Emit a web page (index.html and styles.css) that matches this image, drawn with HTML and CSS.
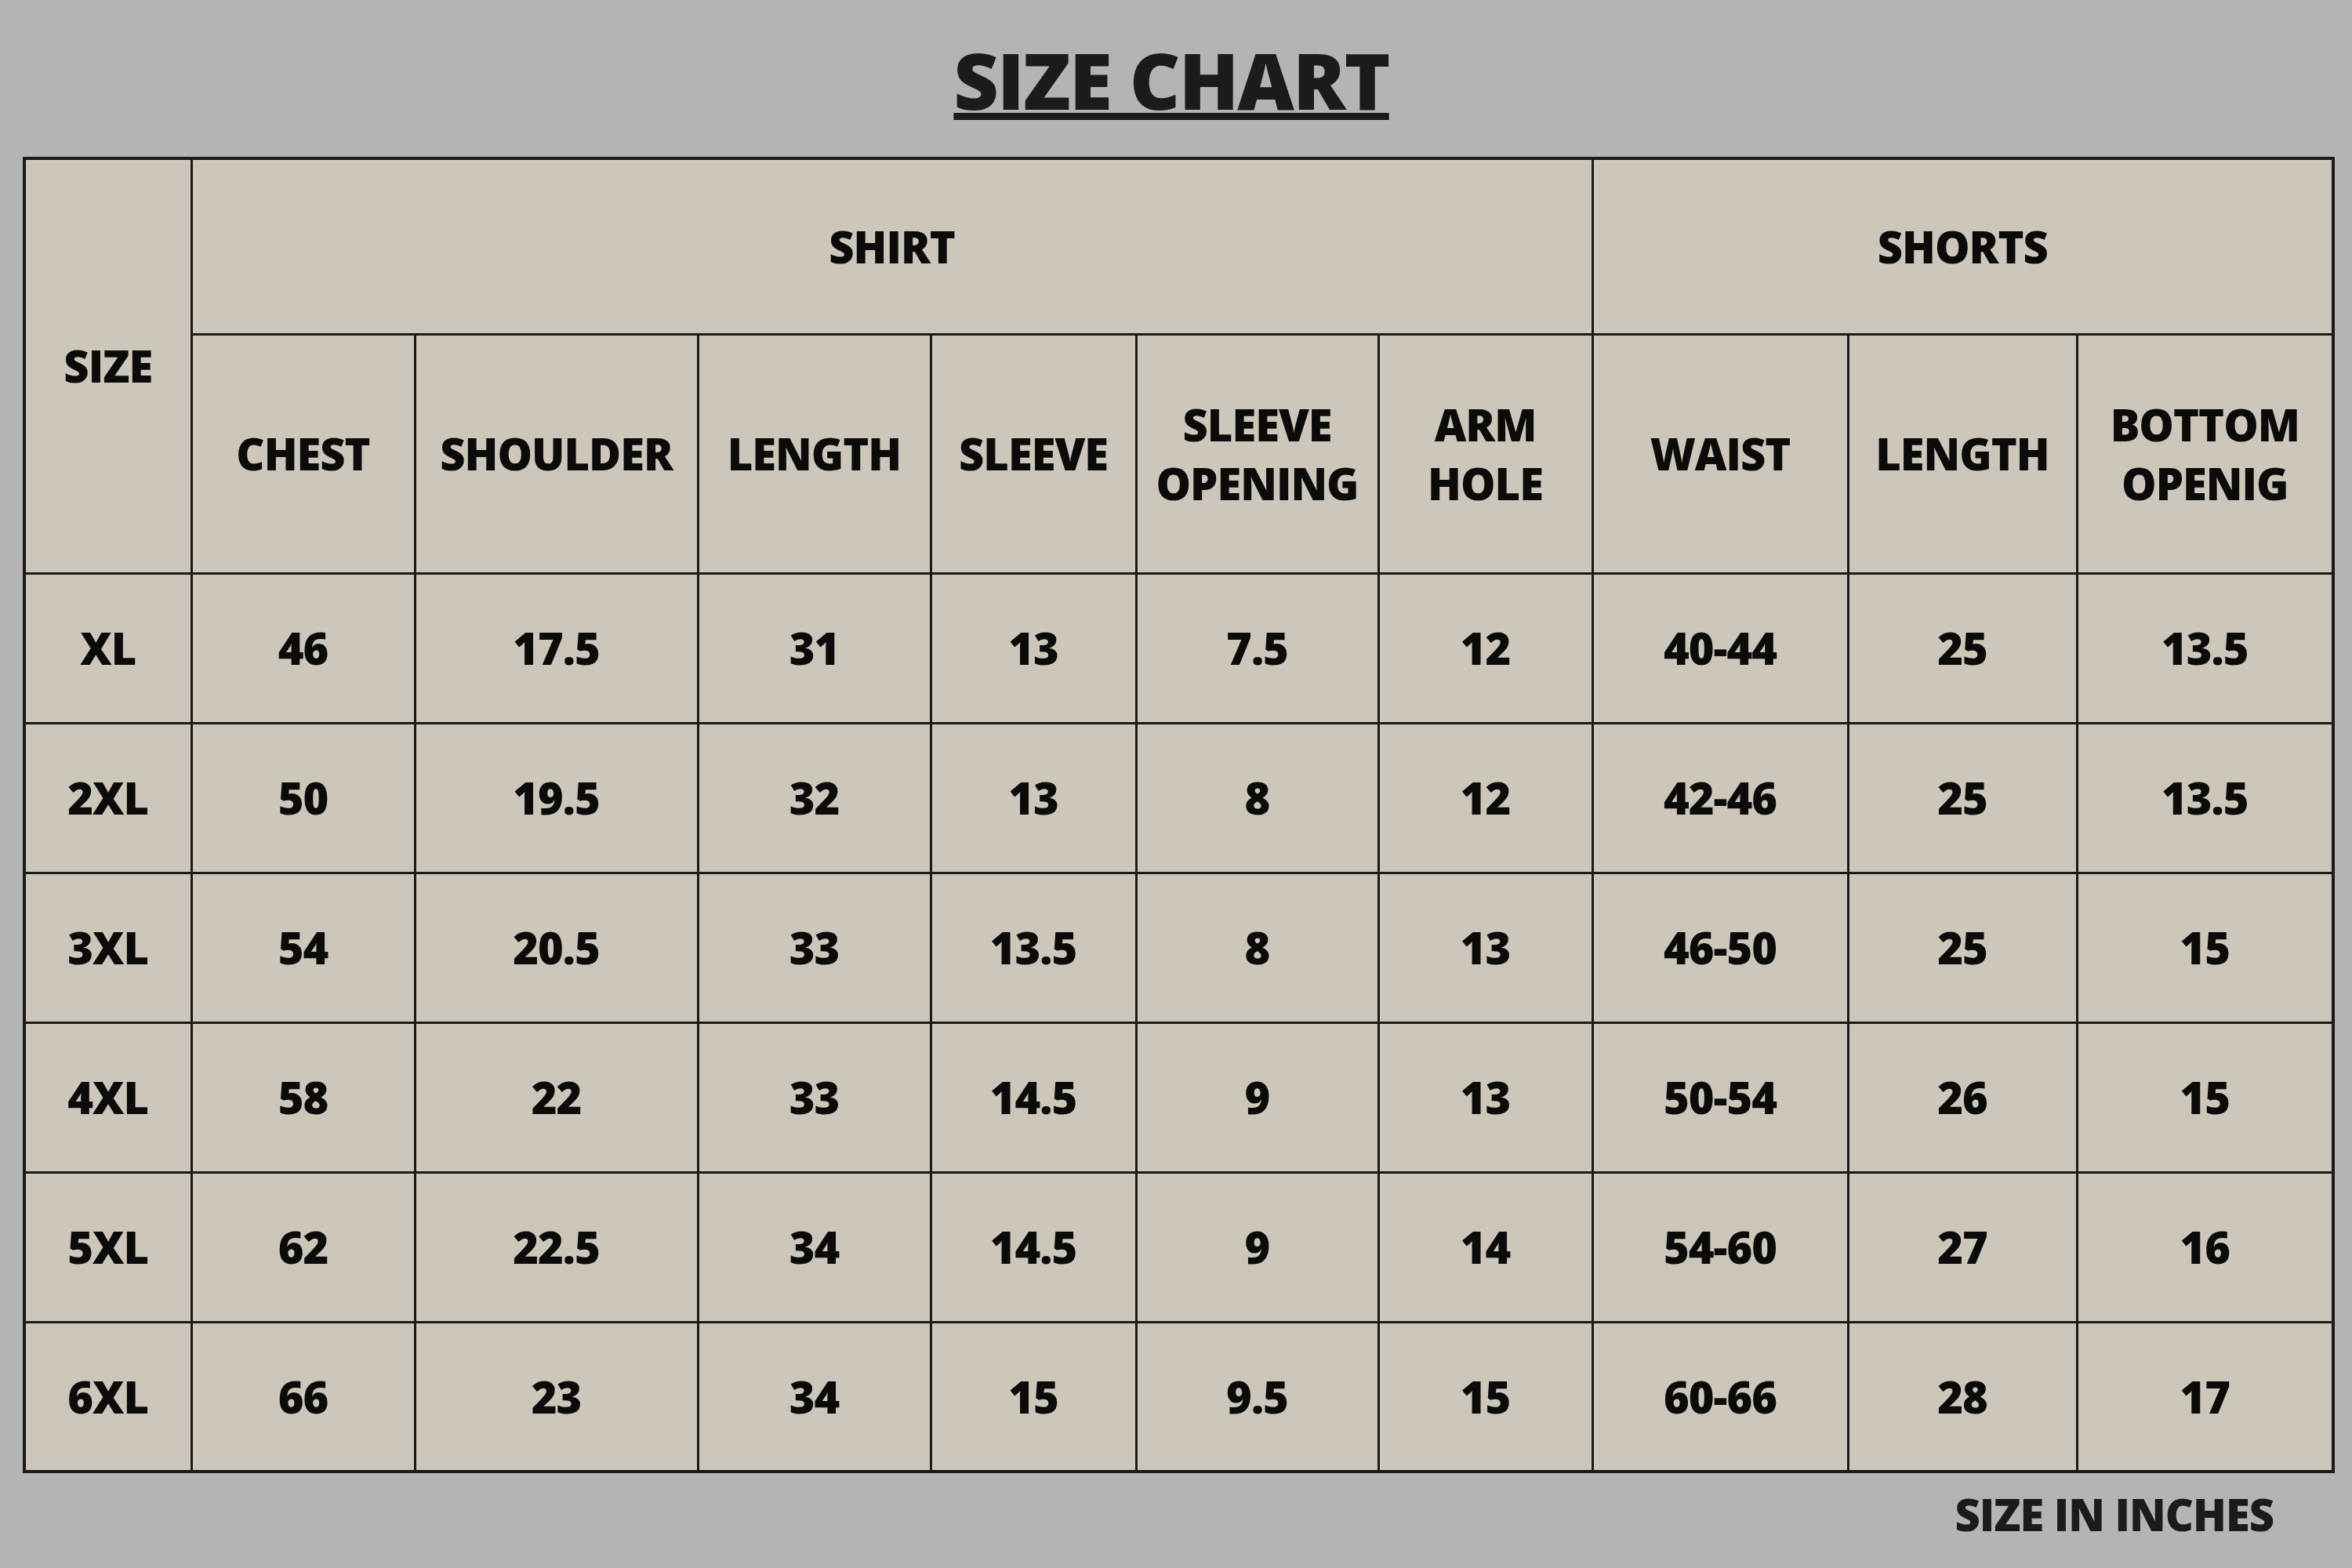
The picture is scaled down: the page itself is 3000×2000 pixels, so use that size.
FILE: index.html
```html
<!DOCTYPE html>
<html>
<head>
<meta charset="utf-8">
<link rel="stylesheet" href="styles.css">
</head>
<body>
<div class="page">
  <div class="title-wrap"><h1 class="title">SIZE CHART</h1></div>
  <table class="chart">
    <colgroup>
      <col class="c-size">
      <col class="c-chest">
      <col class="c-shoulder">
      <col class="c-length">
      <col class="c-sleeve">
      <col class="c-sopen">
      <col class="c-arm">
      <col class="c-waist">
      <col class="c-slength">
      <col class="c-bottom">
    </colgroup>
    <thead>
      <tr class="r-group">
        <th rowspan="2">SIZE</th>
        <th colspan="6">SHIRT</th>
        <th colspan="3">SHORTS</th>
      </tr>
      <tr class="r-head">
        <th>CHEST</th>
        <th>SHOULDER</th>
        <th>LENGTH</th>
        <th>SLEEVE</th>
        <th>SLEEVE<br>OPENING</th>
        <th>ARM<br>HOLE</th>
        <th>WAIST</th>
        <th>LENGTH</th>
        <th>BOTTOM<br>OPENIG</th>
      </tr>
    </thead>
    <tbody>
      <tr><td>XL</td><td>46</td><td>17.5</td><td>31</td><td>13</td><td>7.5</td><td>12</td><td>40-44</td><td>25</td><td>13.5</td></tr>
      <tr><td>2XL</td><td>50</td><td>19.5</td><td>32</td><td>13</td><td>8</td><td>12</td><td>42-46</td><td>25</td><td>13.5</td></tr>
      <tr><td>3XL</td><td>54</td><td>20.5</td><td>33</td><td>13.5</td><td>8</td><td>13</td><td>46-50</td><td>25</td><td>15</td></tr>
      <tr><td>4XL</td><td>58</td><td>22</td><td>33</td><td>14.5</td><td>9</td><td>13</td><td>50-54</td><td>26</td><td>15</td></tr>
      <tr><td>5XL</td><td>62</td><td>22.5</td><td>34</td><td>14.5</td><td>9</td><td>14</td><td>54-60</td><td>27</td><td>16</td></tr>
      <tr><td>6XL</td><td>66</td><td>23</td><td>34</td><td>15</td><td>9.5</td><td>15</td><td>60-66</td><td>28</td><td>17</td></tr>
    </tbody>
  </table>
  <div class="note">SIZE IN INCHES</div>
</div>
</body>
</html>
```

FILE: styles.css
```css
html, body {
  margin: 0;
  padding: 0;
}

body {
  background: #b4b4b4;
  font-family: "Open Sans", "Liberation Sans", sans-serif;
  color: #0d0d0c;
}

.page {
  width: 3000px;
  height: 2000px;
  box-sizing: border-box;
  padding-left: 29px;
}

.title-wrap {
  height: 200px;
  box-sizing: border-box;
  padding-top: 33px;
  padding-right: 41px;
  text-align: center;
}

.title {
  display: inline-block;
  margin: 0;
  font-size: 100px;
  font-weight: 800;
  letter-spacing: -2px;
  line-height: normal;
  color: #1b1b19;
  text-decoration: underline;
  text-decoration-thickness: 9px;
  text-underline-offset: 4px;
}

.chart {
  width: 2945px;
  table-layout: fixed;
  border-collapse: collapse;
  border: 4px solid #1b1a17;
  background: #cdc7bb;
}

.chart th,
.chart td {
  border: 3px solid #1b1a17;
  padding: 0;
  text-align: center;
  vertical-align: middle;
  font-size: 56px;
  font-weight: 800;
  letter-spacing: -1px;
  line-height: 75px;
  color: #0b0b0a;
}

.c-size { width: 213px; }
.c-chest { width: 285px; }
.c-shoulder { width: 361px; }
.c-length { width: 297px; }
.c-sleeve { width: 262px; }
.c-sopen { width: 309px; }
.c-arm { width: 273px; }
.c-waist { width: 326px; }
.c-slength { width: 292px; }
.c-bottom { width: 327px; }

.r-group { height: 224px; }
.r-head { height: 305px; }
.chart tbody tr { height: 191px; }

.note {
  margin-top: 14px;
  padding-right: 100px;
  text-align: right;
  font-size: 56px;
  font-weight: 800;
  letter-spacing: -1px;
  line-height: normal;
  color: #1b1b19;
}
```
